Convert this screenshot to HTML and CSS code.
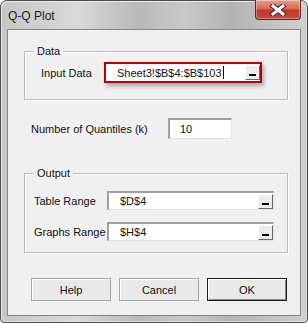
FILE: index.html
```html
<!DOCTYPE html>
<html lang="en">
<head>
  <meta charset="UTF-8">
  <title>Q-Q Plot</title>
  <link rel="stylesheet" href="styles.css">
</head>
<body>

<div class="window">
  <div class="titlebar">
    <span class="title">Q-Q Plot</span>
    <div class="close">
      <svg width="18" height="12" viewBox="0 0 18 12">
        <path d="M4 2 L14 10 M14 2 L4 10" stroke="#3a2a2a" stroke-width="5" stroke-linecap="square"/>
        <path d="M4 2 L14 10 M14 2 L4 10" stroke="#ffffff" stroke-width="3" stroke-linecap="square"/>
      </svg>
    </div>
  </div>

  <div class="client">
    <fieldset class="group group-data">
      <legend>Data</legend>
      <div class="row">
        <span class="label label-input">Input Data</span>
        <div class="ref ref-active">
          <span class="ref-text">Sheet3!$B$4:$B$103<span class="caret"></span></span>
          <span class="ref-btn"><span class="bar"></span></span>
        </div>
      </div>
    </fieldset>

    <div class="row quant">
      <span class="label label-quant">Number of Quantiles (k)</span>
      <div class="num">10</div>
    </div>

    <fieldset class="group group-output">
      <legend>Output</legend>
      <div class="row">
        <span class="label label-out">Table Range</span>
        <div class="ref">
          <span class="ref-text">$D$4</span>
          <span class="ref-btn"><span class="bar"></span></span>
        </div>
      </div>
      <div class="row row-graphs">
        <span class="label label-out">Graphs Range</span>
        <div class="ref">
          <span class="ref-text">$H$4</span>
          <span class="ref-btn"><span class="bar"></span></span>
        </div>
      </div>
    </fieldset>

    <div class="buttons">
      <div class="btn">Help</div>
      <div class="btn">Cancel</div>
      <div class="btn btn-default">OK</div>
    </div>
  </div>
</div>

</body>
</html>
```

FILE: styles.css
```css
body {
  margin: 0;
  background: #ffffff;
  font-family: "Liberation Sans", Arial, sans-serif;
  font-size: 11px;
  color: #111;
}

.window {
  width: 308px;
  height: 323px;
  box-sizing: border-box;
  border: 1px solid #4e4e4e;
  border-radius: 7px 7px 4px 4px;
  background: linear-gradient(90deg, #c6c6c6 0%, #d9d9d9 25%, #b9b9b9 45%, #c9c9c9 60%, #b3b3b3 75%, #cfcfcf 100%);
  box-shadow: inset 1px 1px 0 #e8e8e8, inset -1px -1px 0 #e0e0e0;
}

.titlebar {
  height: 28px;
  display: flex;
  justify-content: space-between;
  align-items: flex-start;
}

.title {
  font-size: 12px;
  color: #1b1b1b;
  margin: 8px 0 0 7px;
}

.close {
  width: 44px;
  height: 19px;
  margin: -1px 6px 0 0;
  border: 1px solid #5b2a22;
  border-top: none;
  border-radius: 0 0 4px 4px;
  background: linear-gradient(#e8a090 0%, #d66b55 45%, #c0392b 55%, #c94a35 100%);
  box-shadow: inset 0 0 0 1px rgba(255, 255, 255, 0.35);
  display: flex;
  justify-content: center;
  align-items: center;
}

.client {
  height: 287px;
  margin: 0 6px;
  box-sizing: border-box;
  border: 1px solid #858585;
  background: #f0f0f0;
}

.group {
  margin: 15px 12px 0 16px;
  padding: 0;
  border: 1px solid #bcbcbc;
  box-shadow: 1px 1px 0 #fff, inset 1px 1px 0 #fff;
}

.group legend {
  margin-left: 9px;
  padding: 0 3px;
  line-height: 13px;
}

.row {
  display: flex;
  align-items: center;
}

.label {
  flex: none;
}

.group-data .row {
  padding: 4px 0 16px 16px;
}

.label-input {
  width: 63px;
}

.ref {
  height: 19px;
  box-sizing: border-box;
  background: #fff;
  border-top: 2px solid #a0a0a0;
  border-left: 2px solid #a0a0a0;
  border-bottom: 1px solid #e3e3e3;
  border-right: 1px solid #e3e3e3;
  display: flex;
  align-items: center;
  justify-content: space-between;
  width: 167px;
}

.ref-text {
  padding-left: 11px;
  display: flex;
  align-items: center;
}

.ref-active {
  width: 158px;
  height: 21px;
  border: 2px solid #c00000;
  box-shadow: 2px 3px 4px rgba(0, 0, 0, 0.3);
}

.ref-active .ref-text {
  padding-left: 11px;
}

.caret {
  width: 1px;
  height: 13px;
  background: #000;
  margin-left: 1px;
}

.ref-btn {
  width: 15px;
  height: 15px;
  box-sizing: border-box;
  border-top: 1px solid #fff;
  border-left: 1px solid #fff;
  border-right: 1px solid #696969;
  border-bottom: 1px solid #696969;
  background: #ececec;
  display: flex;
  justify-content: center;
  align-items: flex-end;
  padding-bottom: 3px;
  margin-right: 0;
}

.bar {
  width: 7px;
  height: 2px;
  background: #000;
}

.quant {
  margin: 18px 0 0 23px;
}

.label-quant {
  width: 137px;
}

.num {
  width: 64px;
  height: 21px;
  box-sizing: border-box;
  background: #fff;
  border-top: 2px solid #a0a0a0;
  border-left: 2px solid #a0a0a0;
  border-bottom: 1px solid #e3e3e3;
  border-right: 1px solid #e3e3e3;
  padding-left: 10px;
  line-height: 18px;
}

.group-output {
  margin-top: 28px;
}

.group-output .row {
  padding: 11px 0 0 9px;
}

.group-output .row-graphs {
  padding-top: 12px;
  padding-bottom: 11px;
}

.label-out {
  width: 73px;
}

.buttons {
  display: flex;
  gap: 8px;
  margin: 25px 0 0 23px;
}

.btn {
  width: 80px;
  height: 23px;
  box-sizing: border-box;
  border: 1px solid #a8a8a8;
  box-shadow: inset 1px 1px 0 #fff;
  background: #e9e9e9;
  display: flex;
  justify-content: center;
  align-items: center;
}

.btn-default {
  border: 1px solid #1c1c1c;
  box-shadow: inset 1px 1px 0 #fff, inset -1px -1px 0 #8a8a8a;
}
```
